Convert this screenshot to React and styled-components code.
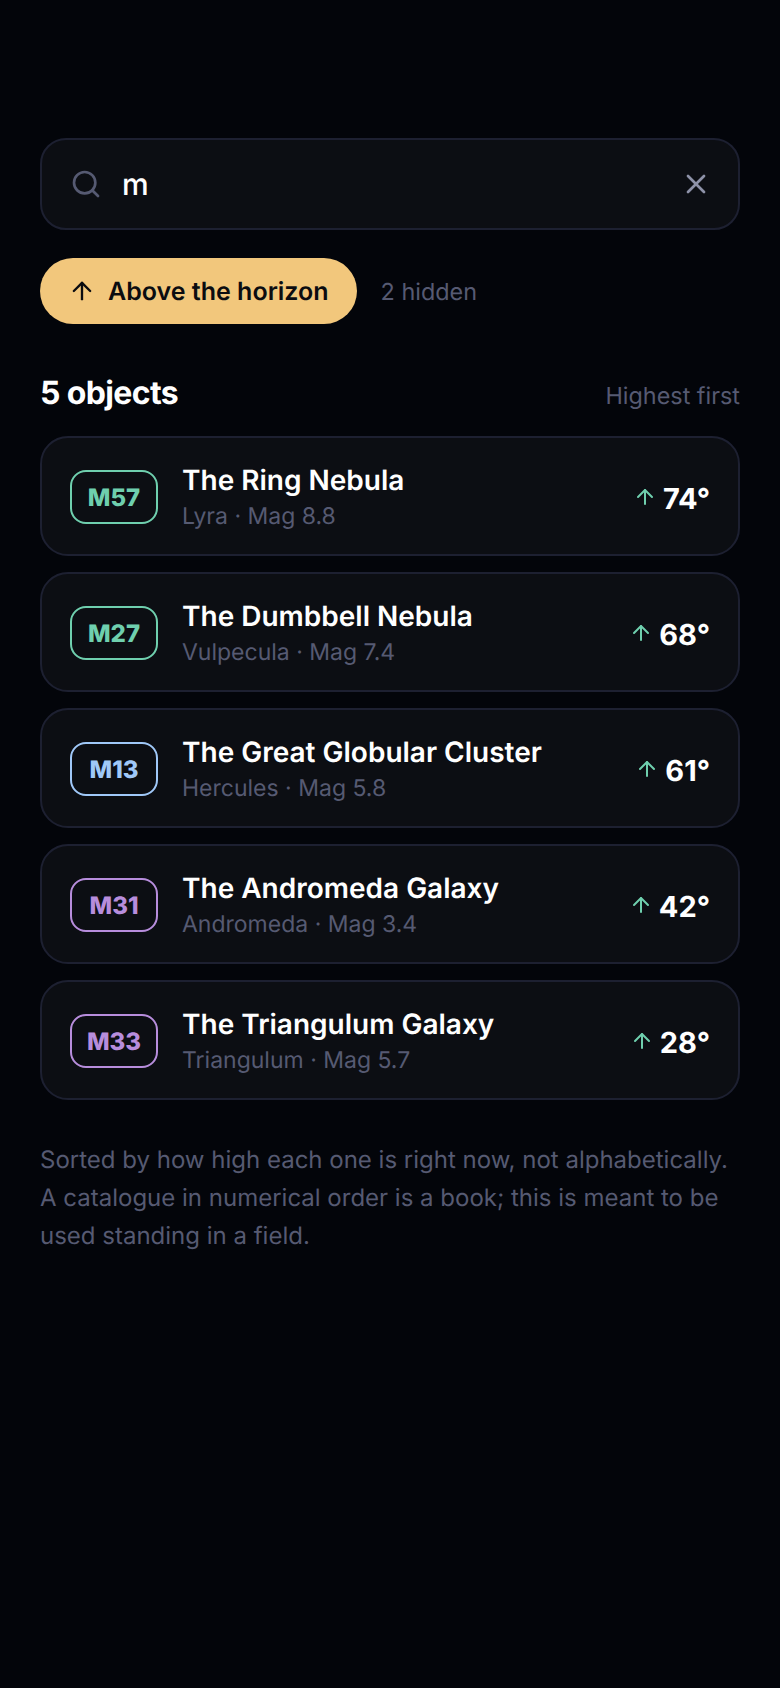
import React from "react";
import styled, { createGlobalStyle } from "styled-components";
import { ArrowUp, Search, X } from "lucide-react";

const objects = [
  { id: "M57", name: "The Ring Nebula", sub: "Lyra · Mag 8.8", alt: "74°", color: "#6fcfae" },
  { id: "M27", name: "The Dumbbell Nebula", sub: "Vulpecula · Mag 7.4", alt: "68°", color: "#6fcfae" },
  { id: "M13", name: "The Great Globular Cluster", sub: "Hercules · Mag 5.8", alt: "61°", color: "#a0c8f8" },
  { id: "M31", name: "The Andromeda Galaxy", sub: "Andromeda · Mag 3.4", alt: "42°", color: "#b78ddc" },
  { id: "M33", name: "The Triangulum Galaxy", sub: "Triangulum · Mag 5.7", alt: "28°", color: "#b78ddc" },
];

function ObjectCard({ id, name, sub, alt, color }) {
  return (
    <Card>
      <Badge $color={color}>{id}</Badge>
      <Info>
        <Name>{name}</Name>
        <Sub>{sub}</Sub>
      </Info>
      <Altitude>
        <ArrowUp size={24} color="#6fcfae" strokeWidth={2} />
        <AltitudeValue>{alt}</AltitudeValue>
      </Altitude>
    </Card>
  );
}

export default function App() {
  return (
    <Page>
      <GlobalStyle />
      <SearchBar>
        <Search size={32} color="#565a72" strokeWidth={2} />
        <SearchInput value="m" readOnly />
        <X size={32} color="#8e92a8" strokeWidth={2} />
      </SearchBar>
      <FilterRow>
        <Pill>
          <ArrowUp size={28} color="#0b0c10" strokeWidth={2} />
          <PillLabel>Above the horizon</PillLabel>
        </Pill>
        <Muted>2 hidden</Muted>
      </FilterRow>
      <ListHeader>
        <Title>5 objects</Title>
        <Muted>Highest first</Muted>
      </ListHeader>
      <List>
        {objects.map((o) => (
          <ObjectCard key={o.id} {...o} />
        ))}
      </List>
      <Footnote>
        Sorted by how high each one is right now, not alphabetically. A catalogue in numerical
        order is a book; this is meant to be used standing in a field.
      </Footnote>
    </Page>
  );
}

const GlobalStyle = createGlobalStyle`
  body {
    margin: 0;
    background: #03050a;
    font-family: "Inter", "Liberation Sans", sans-serif;
    text-rendering: geometricPrecision;
  }
`;

const Page = styled.div`
  box-sizing: border-box;
  min-height: 1688px;
  padding: 138px 40px 0;
  background: #03050a;
`;

const SearchBar = styled.div`
  box-sizing: border-box;
  display: flex;
  align-items: center;
  gap: 20px;
  height: 92px;
  padding: 0 26px 0 28px;
  background: #0c0e13;
  border: 2px solid #1d2031;
  border-radius: 26px;
`;

const SearchInput = styled.input`
  flex: 1;
  min-width: 0;
  padding: 2px 0 0;
  border: none;
  outline: none;
  background: transparent;
  color: #ffffff;
  font-family: inherit;
  font-size: 30px;
  font-weight: 500;
  text-rendering: geometricPrecision;
`;

const FilterRow = styled.div`
  display: flex;
  align-items: center;
  gap: 24px;
  margin-top: 28px;
`;

const Pill = styled.div`
  display: flex;
  align-items: center;
  gap: 12px;
  height: 66px;
  padding: 0 28px;
  background: #f2c77c;
  border-radius: 33px;
  color: #0b0c10;
  font-size: 25px;
  font-weight: 600;
`;

const PillLabel = styled.span`
  padding-top: 2px;
`;

const Muted = styled.span`
  color: #565a72;
  font-size: 23.4px;
  font-weight: 400;
`;

const ListHeader = styled.div`
  display: flex;
  align-items: baseline;
  justify-content: space-between;
  margin-top: 49px;
`;

const Title = styled.h2`
  margin: 0;
  color: #ffffff;
  font-size: 32px;
  font-weight: 700;
  letter-spacing: -0.64px;
`;

const List = styled.div`
  display: flex;
  flex-direction: column;
  gap: 16px;
  margin-top: 24px;
`;

const Card = styled.div`
  box-sizing: border-box;
  display: flex;
  align-items: center;
  gap: 24px;
  height: 120px;
  padding: 2px 28px 0;
  background: #0c0e13;
  border: 2px solid #1d2031;
  border-radius: 28px;
`;

const Badge = styled.div`
  box-sizing: border-box;
  display: flex;
  align-items: center;
  justify-content: center;
  flex: none;
  width: 88px;
  height: 54px;
  border: 2px solid ${(props) => props.$color};
  border-radius: 16px;
  color: ${(props) => props.$color};
  font-size: 24px;
  font-weight: 800;
`;

const Info = styled.div`
  flex: 1;
  min-width: 0;
`;

const Name = styled.div`
  color: #ffffff;
  font-size: 28px;
  font-weight: 610;
  line-height: 36px;
`;

const Sub = styled.div`
  margin-top: 2px;
  color: #565a72;
  font-size: 23px;
  line-height: 32px;
`;

const Altitude = styled.div`
  display: flex;
  align-items: center;
  gap: 6px;
  color: #ffffff;
  font-size: 29px;
  font-weight: 700;
`;

const AltitudeValue = styled.span`
  padding-top: 2px;
`;

const Footnote = styled.p`
  margin: 41px 0 0;
  color: #565a72;
  font-size: 24px;
  line-height: 38px;
`;
